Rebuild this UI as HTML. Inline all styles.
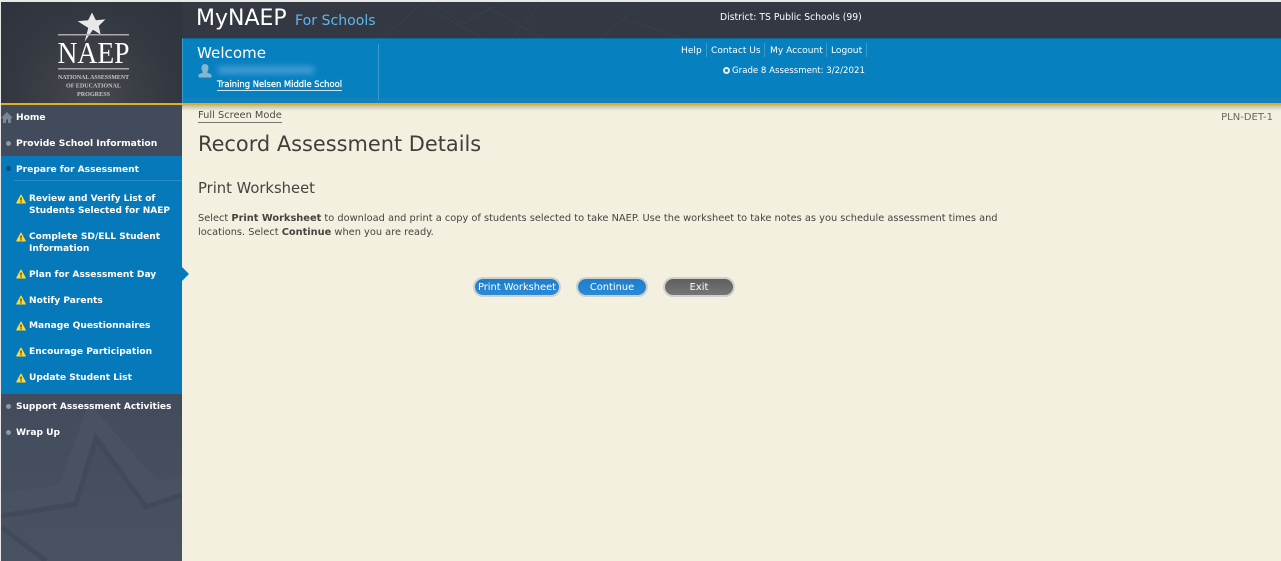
<!DOCTYPE html>
<html><head><meta charset="utf-8"><title>MyNAEP</title>
<style>
html,body{margin:0;padding:0;width:1281px;height:561px;overflow:hidden;background:#f4f0e0;font-family:"DejaVu Sans","Liberation Sans",sans-serif;}
.a{position:absolute;white-space:nowrap;}
#top{left:0;top:0;width:1281px;height:2px;background:#e8e8e8}
#left{left:0;top:0;width:1px;height:561px;background:#e8e8e8;z-index:9}
#logo{left:1px;top:2px;width:181px;height:101px;background:radial-gradient(ellipse at 50% 100%,#46484e 0%,#33373f 65%,#2f333c 100%)}
#dark{left:182px;top:2px;width:1099px;height:36px;background:#333842}
#blue{left:182px;top:38px;width:1099px;height:65px;background:#0680bf;border-top:1px solid #0a6a9c;box-sizing:border-box;border-left:1px solid #3a9acb}
#band{left:183px;top:98px;width:1098px;height:5px;background:#1481bd}
#gold{left:0;top:103px;width:1281px;height:2px;background:#dcb020}
#shadow{left:182px;top:105px;width:1099px;height:6px;background:linear-gradient(#b9b8ae,#f4f0e0)}
#side{left:1px;top:105px;width:181px;height:456px;background:linear-gradient(#424b5c 60%,#495261)}
#sel{left:1px;top:156px;width:181px;height:238px;background:#0679bb}
#selline{left:14px;top:180px;width:168px;height:1px;background:#2a8cc4}
.n{position:absolute;left:16px;font-size:9.100px;font-weight:bold;color:#fff;white-space:nowrap;line-height:12px}
.s{position:absolute;left:29px;font-size:9.100px;font-weight:bold;color:#fff;white-space:nowrap;line-height:12px}
.d{position:absolute;left:6px;width:5px;height:5px;border-radius:50%;background:#8e96a3}
.w{position:absolute;left:15.500px}
.b{position:absolute;top:279px;height:16px;line-height:17px;border-radius:9px;background:linear-gradient(#1f7ecb,#2a8ad6);color:#fff;font-size:9.850px;text-align:center;box-shadow:0 0 0 2px #cfd0cc;}
.l{position:absolute;top:45px;font-size:9.100px;color:#fff;line-height:12px;white-space:nowrap}
.v{position:absolute;top:43px;width:1px;height:14px;background:#3a9acb}
</style></head><body>
<div class="a" id="top"></div><div class="a" id="left"></div>
<div class="a" id="logo"></div>
<svg class="a" style="left:40px;top:5px" width="105" height="95" viewBox="0 0 105 95">
<path d="M52 7L56 15L66 14L59 21L61 30L53 25L44 38L48 23L37 16L48 15z" fill="#e8e8e8" stroke="#33373f" stroke-width=".5"/>
<rect x="18" y="29" width="71" height="1.500" fill="#a8aaae"/>
<rect x="18" y="63" width="71" height="1.500" fill="#a8aaae"/>
<text x="53.500" y="58" text-anchor="middle" font-family="Liberation Serif" font-size="31" fill="#fff" textLength="72" lengthAdjust="spacingAndGlyphs">NAEP</text>
<text x="53.500" y="74" text-anchor="middle" font-family="Liberation Serif" font-size="6" font-weight="bold" fill="#c6c7c9" textLength="71" lengthAdjust="spacingAndGlyphs">NATIONAL ASSESSMENT</text>
<text x="53.500" y="82.500" text-anchor="middle" font-family="Liberation Serif" font-size="6" font-weight="bold" fill="#c6c7c9" textLength="55" lengthAdjust="spacingAndGlyphs">OF EDUCATIONAL</text>
<text x="53.500" y="91" text-anchor="middle" font-family="Liberation Serif" font-size="6" font-weight="bold" fill="#c6c7c9" textLength="33" lengthAdjust="spacingAndGlyphs">PROGRESS</text>
</svg>
<div class="a" id="dark"></div>
<svg class="a" style="left:182px;top:2px" width="500" height="36"><g stroke="#444a55" stroke-width="1" fill="none" opacity=".4"><path d="M200 36l40-34 60 34M300 2l60 34M360 0l-30 36M420 36l40-36M250 0l30 22 40-22M450 20l50 16"/></g></svg>
<div class="a" id="blue"></div><div class="a" id="band"></div>
<div class="a" style="left:378px;top:44px;width:1px;height:56px;background:#3a9acb"></div>
<div class="a" id="gold"></div><div class="a" id="shadow"></div>
<div class="a" id="side"></div>
<svg class="a" style="left:1px;top:394px" width="181" height="167"><path d="M0 99L58 91L88 9L157 88L181 83V101L145 113L95 44L75 110L0 122z" fill="#485262"/><path d="M0 122L75 110L95 44L145 113L181 101" fill="none" stroke="#414a5a" stroke-width="5"/><path d="M0 133L45 167" fill="none" stroke="#414a5a" stroke-width="5"/></svg>
<div class="a" id="sel"></div><div class="a" id="selline"></div>
<div class="a" style="left:182px;top:267px;width:0;height:0;border-left:7px solid #0679bb;border-top:7.500px solid transparent;border-bottom:7.500px solid transparent"></div>

<div class="a" style="left:196px;top:5px;font-size:22px;color:#fff;line-height:28px">MyNAEP</div>
<div class="a" style="left:295px;top:11px;font-size:14.100px;color:#5cb8f0;line-height:20px">For Schools</div>
<div class="a" style="left:720px;top:12px;font-size:9.270px;color:#fff;line-height:12px">District: TS Public Schools (99)</div>
<div class="a" style="left:197px;top:43px;font-size:15.100px;color:#fff;line-height:20px">Welcome</div>
<svg class="a" style="left:198px;top:64px" width="14" height="14"><path d="M7 0c2.500 0 3.500 2 3.500 4S9.500 7.500 9 8.500l4.500 2V13.500H.5V10.500L5 8.500C4.500 7.500 3.500 6 3.500 4S4.500 0 7 0z" fill="#86b5d0"/></svg>
<div class="a" style="left:218px;top:66px;width:96px;height:8px;background:#3f9bd0;filter:blur(3px)"></div>
<div class="a" style="left:217px;top:78px;font-size:8.400px;color:#fff;line-height:12px;border-bottom:1px solid #cfe4f0;-webkit-text-stroke:.25px #fff">Training Nelsen Middle School</div>
<div class="l" style="left:681px">Help</div>
<div class="l" style="left:711px">Contact Us</div>
<div class="l" style="left:770px">My Account</div>
<div class="l" style="left:831px">Logout</div>
<div class="v" style="left:706px"></div>
<div class="v" style="left:764px"></div>
<div class="v" style="left:826px"></div>
<div class="v" style="left:866px"></div>
<div class="a" style="left:723px;top:67px;width:3px;height:3px;border:2px solid #e3eef5;border-radius:50%"></div>
<div class="a" style="left:732px;top:65px;font-size:8.600px;color:#fff;line-height:12px">Grade 8 Assessment: 3/2/2021</div>

<svg class="a" style="left:1px;top:112px" width="12" height="11"><path d="M6 0L12 6H10V11H7V7.500H5V11H2V6H0z" fill="#7d8694"/></svg>
<div class="n" style="top:112px">Home</div>
<div class="d" style="top:141px"></div><div class="n" style="top:138px;font-size:9.200px">Provide School Information</div>
<div class="d" style="top:166px;background:#0a4f80"></div><div class="n" style="top:164px">Prepare for Assessment</div>

<div class="s" style="top:193px;font-size:9px">Review and Verify List of<br>Students Selected for NAEP</div>
<div class="s" style="top:231px">Complete SD/ELL Student<br>Information</div>
<div class="s" style="top:269px">Plan for Assessment Day</div>
<div class="s" style="top:295px">Notify Parents</div>
<div class="s" style="top:320px">Manage Questionnaires</div>
<div class="s" style="top:346px">Encourage Participation</div>
<div class="s" style="top:372px">Update Student List</div>
<svg class="w" style="top:194px" width="10" height="10"><path d="M5 1L9.300 9H.7z" fill="#ffd92e" stroke="#ffd92e" stroke-linejoin="round"/><path d="M5 3.500V6.500M5 7.300V8.500" stroke="#333" stroke-width="1.200"/></svg>
<svg class="w" style="top:232px" width="10" height="10"><path d="M5 1L9.300 9H.7z" fill="#ffd92e" stroke="#ffd92e" stroke-linejoin="round"/><path d="M5 3.500V6.500M5 7.300V8.500" stroke="#333" stroke-width="1.200"/></svg>
<svg class="w" style="top:269px" width="10" height="10"><path d="M5 1L9.300 9H.7z" fill="#ffd92e" stroke="#ffd92e" stroke-linejoin="round"/><path d="M5 3.500V6.500M5 7.300V8.500" stroke="#333" stroke-width="1.200"/></svg>
<svg class="w" style="top:295px" width="10" height="10"><path d="M5 1L9.300 9H.7z" fill="#ffd92e" stroke="#ffd92e" stroke-linejoin="round"/><path d="M5 3.500V6.500M5 7.300V8.500" stroke="#333" stroke-width="1.200"/></svg>
<svg class="w" style="top:321px" width="10" height="10"><path d="M5 1L9.300 9H.7z" fill="#ffd92e" stroke="#ffd92e" stroke-linejoin="round"/><path d="M5 3.500V6.500M5 7.300V8.500" stroke="#333" stroke-width="1.200"/></svg>
<svg class="w" style="top:347px" width="10" height="10"><path d="M5 1L9.300 9H.7z" fill="#ffd92e" stroke="#ffd92e" stroke-linejoin="round"/><path d="M5 3.500V6.500M5 7.300V8.500" stroke="#333" stroke-width="1.200"/></svg>
<svg class="w" style="top:373px" width="10" height="10"><path d="M5 1L9.300 9H.7z" fill="#ffd92e" stroke="#ffd92e" stroke-linejoin="round"/><path d="M5 3.500V6.500M5 7.300V8.500" stroke="#333" stroke-width="1.200"/></svg>
<div class="d" style="top:404px"></div><div class="n" style="top:401px;font-size:9.020px">Support Assessment Activities</div>
<div class="d" style="top:430px"></div><div class="n" style="top:427px">Wrap Up</div>

<div class="a" style="left:198px;top:110px;font-size:9.850px;color:#4a4a44;line-height:12px;padding-bottom:0;border-bottom:1px solid #77776f">Full Screen Mode</div>
<div class="a" style="right:8px;top:112px;font-size:10px;color:#666;line-height:12px">PLN-DET-1</div>
<div class="a" style="left:198px;top:129px;font-size:20.900px;color:#3f3f3b;line-height:30px">Record Assessment Details</div>
<div class="a" style="left:198px;top:179px;font-size:14.750px;color:#444440;line-height:20px">Print Worksheet</div>
<div class="a" style="left:198px;top:212px;font-size:9.820px;color:#444440;line-height:14px">Select <b>Print Worksheet</b> to download and print a copy of students selected to take NAEP. Use the worksheet to take notes as you schedule assessment times and<br>locations. Select <b>Continue</b> when you are ready.</div>

<div class="b" style="left:475px;width:84px">Print Worksheet</div>
<div class="b" style="left:578px;width:68px">Continue</div>
<div class="b" style="left:665px;width:68px;background:linear-gradient(#5f5f5f,#767676)">Exit</div>
</body></html>
